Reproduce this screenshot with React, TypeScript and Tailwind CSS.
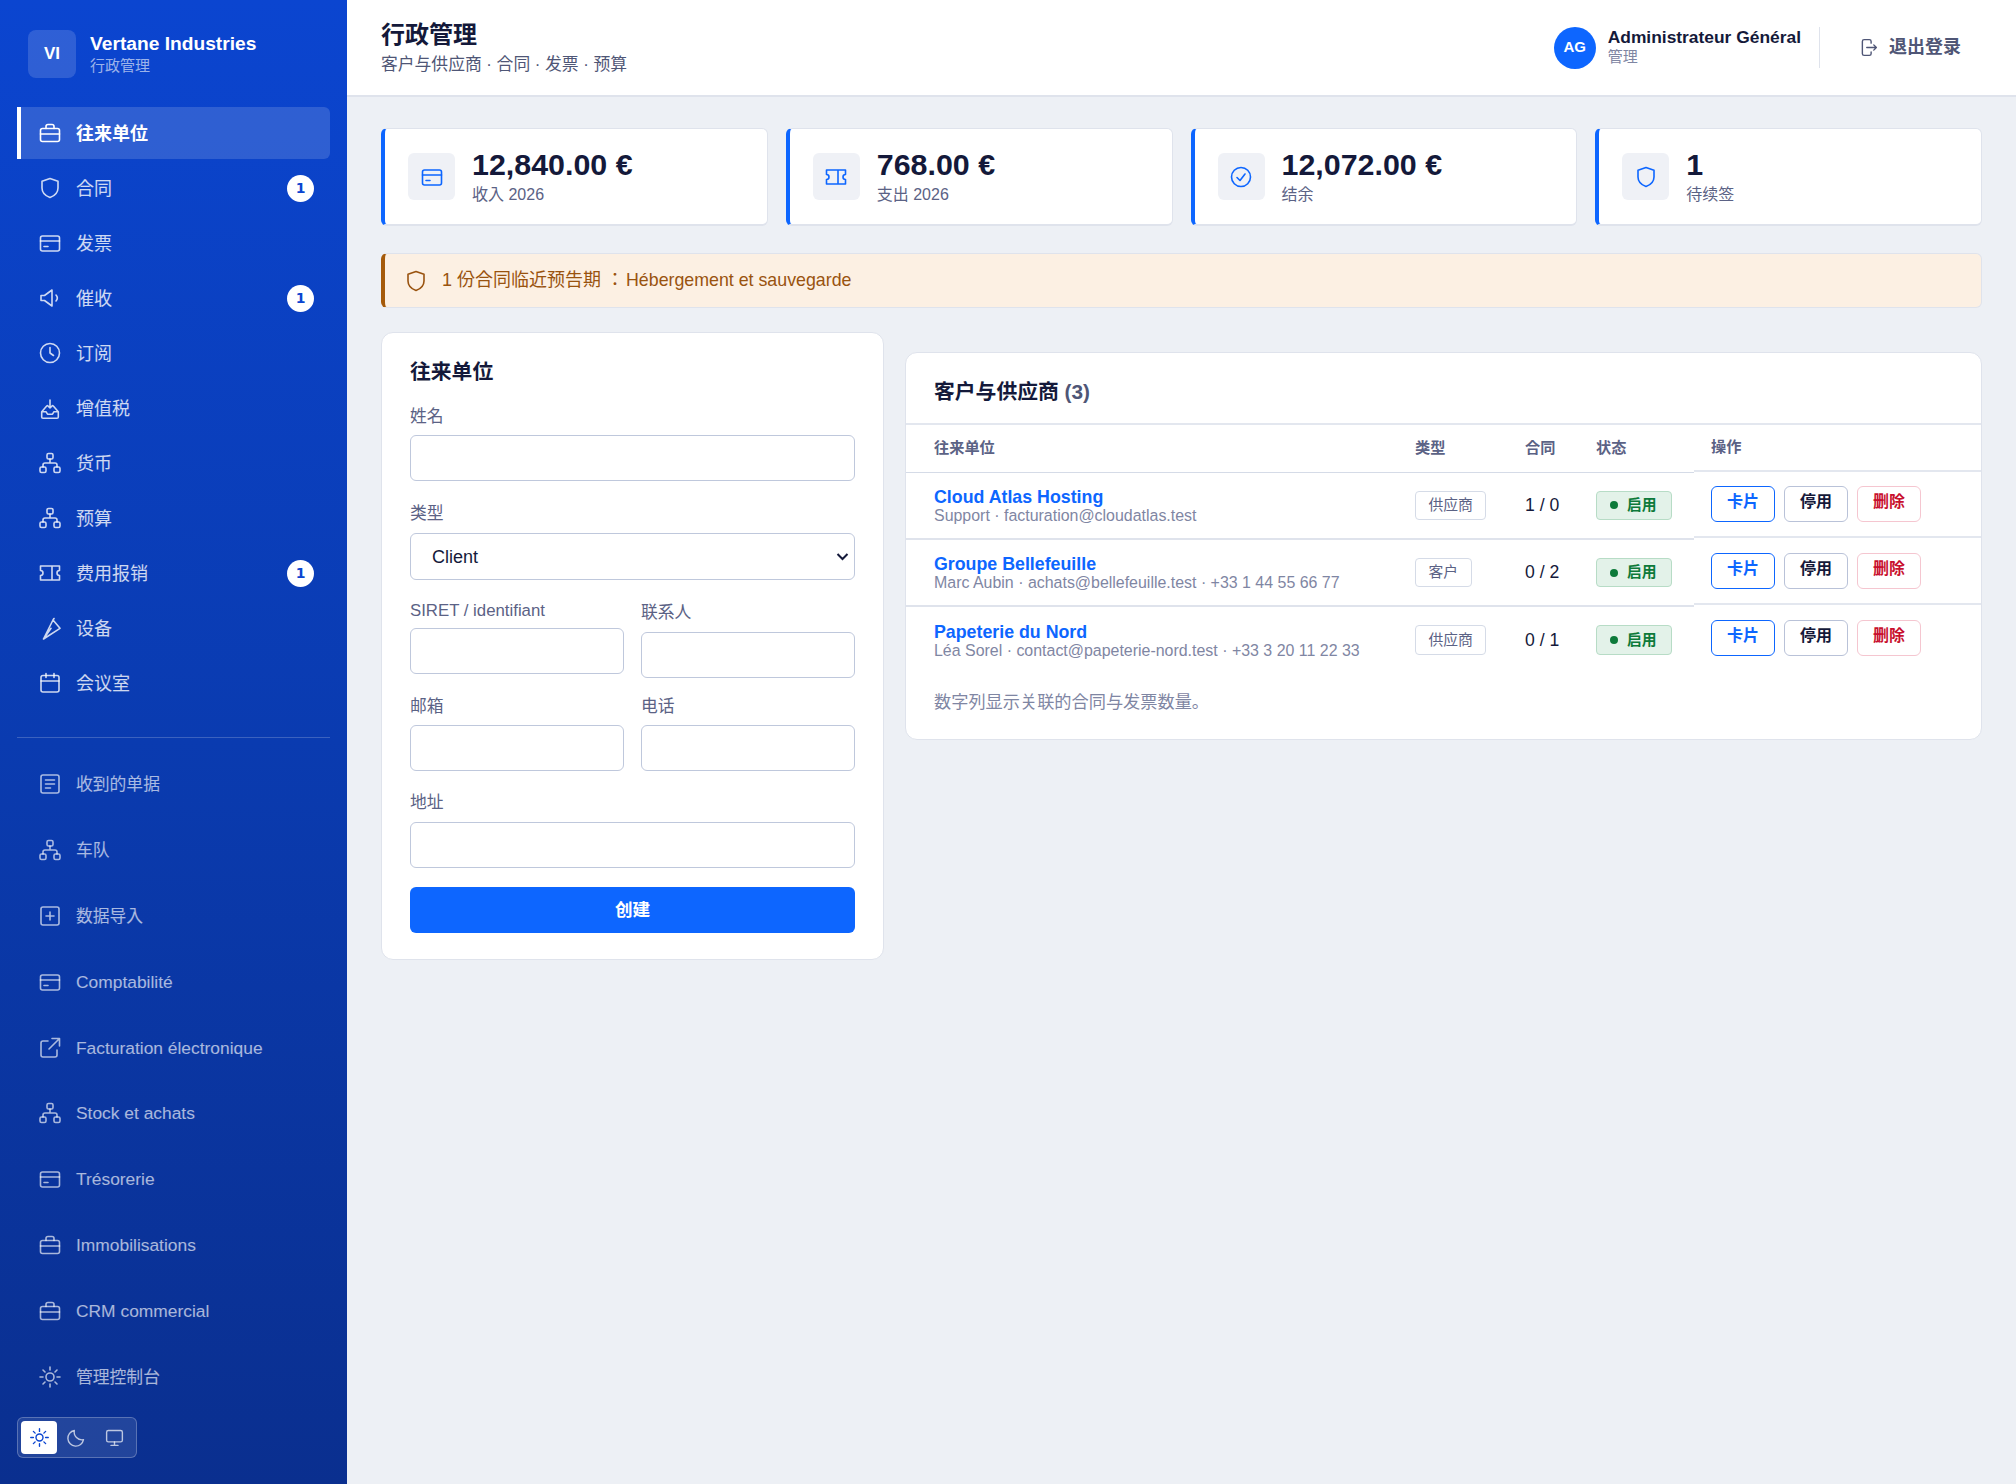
import type { ReactNode } from 'react';

const icons: Record<string, ReactNode> = {
  briefcase: (
    <>
      <rect x="2.500" y="7.500" width="19" height="13" rx="2" />
      <path d="M8 7.500V5.500a2 2 0 0 1 2-2h4a2 2 0 0 1 2 2v2M2.500 13h19" />
    </>
  ),
  shield: <path d="M12 2.500l8 2.800V12c0 4.600-3.400 7.800-8 9.500C7.400 19.800 4 16.600 4 12V5.300z" />,
  card: (
    <>
      <rect x="2.500" y="5" width="19" height="15" rx="2" />
      <path d="M2.500 10h19M6 15.500h4" />
    </>
  ),
  megaphone: <path d="M3 9.500v5h3.500L14 20V4L6.500 9.500zM18 9a4.500 4.500 0 0 1 0 6" />,
  clock: (
    <>
      <circle cx="12" cy="12" r="9.500" />
      <path d="M12 6.500V12l3.500 2.500" />
    </>
  ),
  inbox: (
    <path d="M8.700 10L3.700 15.700v5.300a1.300 1.300 0 0 0 1.300 1.300h14a1.300 1.300 0 0 0 1.300-1.300v-5.300L15.300 10M3.700 15.700H8l1.500 2.500h5l1.500-2.500h4.300M12 4v8M9.500 9.500L12 12l2.500-2.500" />
  ),
  network: (
    <>
      <rect x="9" y="2.500" width="6" height="5.500" rx="1.500" />
      <rect x="2" y="16" width="6" height="5.500" rx="1.500" />
      <rect x="16" y="16" width="6" height="5.500" rx="1.500" />
      <path d="M12 8v4M5 16v-2a2 2 0 0 1 2-2h10a2 2 0 0 1 2 2v2" />
    </>
  ),
  ticket: <path d="M2.500 5h19v4.500a2.500 2.500 0 0 0 0 5V19h-19v-4.500a2.500 2.500 0 0 0 0-5zM14 5v14" />,
  pen: <path d="M5.500 23L15 4l7 8.300L5.500 23zM5.500 23l7.500-10.700M15 4l1-1.500" />,
  calendar: (
    <>
      <rect x="3" y="4.500" width="18" height="16.500" rx="2" />
      <path d="M3 10h18M8 2.500v4M16 2.500v4" />
    </>
  ),
  list: (
    <>
      <rect x="3" y="3" width="18" height="18" rx="2" />
      <path d="M7.500 8h9M7.500 12h9M7.500 16h5" />
    </>
  ),
  plus: (
    <>
      <rect x="3" y="3" width="18" height="18" rx="2" />
      <path d="M12 8v8M8 12h8" />
    </>
  ),
  external: <path d="M10 5H5a2 2 0 0 0-2 2v12a2 2 0 0 0 2 2h12a2 2 0 0 0 2-2v-5M14 2.500h7.500V10M21.500 2.500L11 13" />,
  sun: (
    <>
      <circle cx="12" cy="12" r="4" />
      <path d="M12 2v3M12 19v3M2 12h3M19 12h3M5 5l2 2M17 17l2 2M5 19l2-2M17 7l2-2" />
    </>
  ),
  moon: <path d="M20 14.500A9 9 0 0 1 9.500 4a9 9 0 1 0 10.500 10.500z" />,
  monitor: (
    <>
      <rect x="3" y="4" width="18" height="13" rx="2" />
      <path d="M12 17v4M8 21h8" />
    </>
  ),
  logout: <path d="M15 7V5a2 2 0 0 0-2-2H7a2 2 0 0 0-2 2v14a2 2 0 0 0 2 2h6a2 2 0 0 0 2-2v-2M10 12h11M18 9l3 3-3 3" />,
  check: (
    <>
      <circle cx="12" cy="12" r="9.500" />
      <path d="M8 12.500l3 3 5-6.500" />
    </>
  ),
};

function Icon({ name, className }: { name: string; className?: string }) {
  return (
    <svg viewBox="0 0 24 24" fill="none" stroke="currentColor" strokeWidth="1.6" strokeLinecap="round" strokeLinejoin="round" className={className}>
      {icons[name]}
    </svg>
  );
}

const mainNav = [
  { icon: 'briefcase', label: '往来单位', active: true },
  { icon: 'shield', label: '合同', badge: 1 },
  { icon: 'card', label: '发票' },
  { icon: 'megaphone', label: '催收', badge: 1 },
  { icon: 'clock', label: '订阅' },
  { icon: 'inbox', label: '增值税' },
  { icon: 'network', label: '货币' },
  { icon: 'network', label: '预算' },
  { icon: 'ticket', label: '费用报销', badge: 1 },
  { icon: 'pen', label: '设备' },
  { icon: 'calendar', label: '会议室' },
];

const extraNav = [
  { icon: 'list', label: '收到的单据' },
  { icon: 'network', label: '车队' },
  { icon: 'plus', label: '数据导入' },
  { icon: 'card', label: 'Comptabilité', latin: true },
  { icon: 'external', label: 'Facturation électronique', latin: true },
  { icon: 'network', label: 'Stock et achats', latin: true },
  { icon: 'card', label: 'Trésorerie', latin: true },
  { icon: 'briefcase', label: 'Immobilisations', latin: true },
  { icon: 'briefcase', label: 'CRM commercial', latin: true },
  { icon: 'sun', label: '管理控制台' },
];

const stats = [
  { icon: 'card', value: '12,840.00 €', label: '收入 2026' },
  { icon: 'ticket', value: '768.00 €', label: '支出 2026' },
  { icon: 'check', value: '12,072.00 €', label: '结余' },
  { icon: 'shield', value: '1', label: '待续签' },
];

const partners = [
  { name: 'Cloud Atlas Hosting', info: 'Support · facturation@cloudatlas.test', type: '供应商', count: '1 / 0' },
  { name: 'Groupe Bellefeuille', info: 'Marc Aubin · achats@bellefeuille.test · +33 1 44 55 66 77', type: '客户', count: '0 / 2' },
  { name: 'Papeterie du Nord', info: 'Léa Sorel · contact@papeterie-nord.test · +33 3 20 11 22 33', type: '供应商', count: '0 / 1' },
];

function Sidebar() {
  return (
    <aside className="w-[347px] shrink-0 flex flex-col bg-gradient-to-b from-[#0b45d0] via-[#0a3bb0] to-[#0a2f8f] px-[17px] pt-[30px]">
      <div className="flex items-center gap-[14px] pl-[11px] mb-[29px]">
        <div className="w-[48px] h-[48px] rounded-lg bg-white/15 flex items-center justify-center text-white font-bold text-[17px]">VI</div>
        <div className="flex flex-col">
          <span className="text-white font-bold text-[19.2px] leading-[24px]">Vertane Industries</span>
          <span className="text-white/60 text-[15px] leading-[20px]">行政管理</span>
        </div>
      </div>
      <nav className="flex flex-col gap-[3px]">
        {mainNav.map((item) => (
          <div
            key={item.label}
            className={
              item.active
                ? 'h-[52px] flex items-center pl-[17px] pr-[16px] rounded-r-md border-l-4 border-white bg-white/15 text-white font-bold text-[18px]'
                : 'h-[52px] flex items-center pl-[21px] pr-[16px] text-white/80 text-[18px]'
            }
          >
            <Icon name={item.icon} className="w-[24px] h-[24px] shrink-0" />
            <span className="ml-[14px] mt-[2px]">{item.label}</span>
            {item.badge ? (
              <span className="ml-auto w-[27px] h-[27px] rounded-full bg-white text-[#0b45d0] text-[14px] font-bold flex items-center justify-center font-['DejaVu_Sans',sans-serif]">
                {item.badge}
              </span>
            ) : null}
          </div>
        ))}
      </nav>
      <div className="h-px bg-white/20 mt-[28px] mb-[20px]" />
      <nav className="flex flex-col gap-[13.9px]">
        {extraNav.map((item) => (
          <div key={item.label} className="h-[52px] flex items-center pl-[21px] text-white/65">
            <Icon name={item.icon} className="w-[24px] h-[24px] shrink-0" />
            <span className={item.latin ? 'ml-[14px] text-[17.4px]' : 'ml-[14px] mt-[2px] text-[16.8px]'}>{item.label}</span>
          </div>
        ))}
      </nav>
      <div className="mt-[14px] w-[120px] h-[41px] flex items-center p-[3px] rounded-md border border-white/25 bg-white/10">
        <div className="w-[36px] h-[33px] rounded-sm bg-white text-[#0b45d0] flex items-center justify-center">
          <Icon name="sun" className="w-[21px] h-[21px]" />
        </div>
        <div className="w-[38px] h-[33px] text-white/70 flex items-center justify-center">
          <Icon name="moon" className="w-[21px] h-[21px]" />
        </div>
        <div className="w-[38px] h-[33px] text-white/70 flex items-center justify-center">
          <Icon name="monitor" className="w-[21px] h-[21px]" />
        </div>
      </div>
    </aside>
  );
}

function Header() {
  return (
    <header className="h-[97px] flex items-center justify-between bg-white border-b-2 border-[#dfe3ec] pl-[34px] pr-[55px]">
      <div className="flex flex-col">
        <h1 className="text-[24px] leading-[34px] font-bold text-[#14193a]">行政管理</h1>
        <p className="text-[16.8px] leading-[26px] text-[#4f5676]">客户与供应商 · 合同 · 发票 · 预算</p>
      </div>
      <div className="flex items-center">
        <div className="w-[42px] h-[42px] rounded-full bg-[#0d66ff] text-white font-bold text-[15px] flex items-center justify-center">AG</div>
        <div className="ml-[12px] pb-[2px] flex flex-col">
          <span className="text-[17.4px] leading-[21px] font-bold text-[#14193a]">Administrateur Général</span>
          <span className="text-[15px] leading-[18px] text-[#7f86a3]">管理</span>
        </div>
        <div className="w-px h-[41px] bg-[#dfe3ec] ml-[18px] mr-[38px]" />
        <Icon name="logout" className="w-[21px] h-[21px] text-[#4f5676]" />
        <span className="ml-[10px] text-[18px] font-bold text-[#4f5676]">退出登录</span>
      </div>
    </header>
  );
}

function StatCard({ icon, value, label }: { icon: string; value: string; label: string }) {
  return (
    <div className="h-[98px] flex items-center bg-white rounded-md border border-[#dfe3ec] border-b-2 border-l-4 border-l-[#0d66ff] pl-[23px]">
      <div className="w-[47px] h-[47px] rounded-md bg-[#eff1f6] text-[#0d66ff] flex items-center justify-center">
        <Icon name={icon} className="w-[24px] h-[24px]" />
      </div>
      <div className="ml-[17px] flex flex-col">
        <span className="text-[30.4px] leading-[34px] font-bold text-[#14193a]">{value}</span>
        <span className="mt-[2px] text-[16px] leading-[24px] text-[#5b6285]">{label}</span>
      </div>
    </div>
  );
}

const inputClass = 'block w-full h-[46px] rounded-md border-[1.5px] border-[#bfc8dc] bg-white';
const labelClass = 'block leading-[normal] text-[16.8px] text-[#5b6285] mb-[8.5px]';

function Field({ label, className }: { label: string; className?: string }) {
  return (
    <div className={className}>
      <label className={labelClass}>{label}</label>
      <input className={inputClass} />
    </div>
  );
}

function PartnerForm() {
  return (
    <section className="bg-white rounded-xl border-[1.5px] border-[#dfe3ec] px-[28px] pt-[23.5px] pb-[26px]">
      <h2 className="text-[20.8px] leading-[30px] font-bold text-[#14193a] mb-[16px]">往来单位</h2>
      <Field label="姓名" className="mb-[19px]" />
      <div className="mb-[19px]">
        <label className={labelClass}>类型</label>
        <div className="relative">
          <select className="block w-full h-[47.5px] rounded-md border-[1.5px] border-[#bfc8dc] bg-white pl-[21px] pt-[2px] text-[18px] text-[#14193a] appearance-none">
            <option>Client</option>
          </select>
          <svg viewBox="0 0 12 8" fill="none" stroke="#14193a" strokeWidth="2" className="absolute right-[6px] top-[20px] w-[13px] h-[8px]">
            <path d="M1 1l5 5 5-5" />
          </svg>
        </div>
      </div>
      <div className="grid grid-cols-2 gap-x-[17px] gap-y-[15px] items-start mb-[18px]">
        <div>
          <label className="block leading-[normal] text-[16.8px] text-[#5b6285] pt-[2px] mb-[6.5px]">SIRET / identifiant</label>
          <input className={inputClass} />
        </div>
        <Field label="联系人" />
        <Field label="邮箱" />
        <Field label="电话" />
      </div>
      <Field label="地址" className="mb-[19px]" />
      <button className="block w-full h-[46px] pt-[2px] rounded-md bg-[#0d66ff] text-white font-bold text-[17.6px]">创建</button>
    </section>
  );
}

function PartnerTable() {
  return (
    <section className="mt-[20px] self-start bg-white rounded-xl border-[1.5px] border-[#dfe3ec] overflow-hidden">
      <h2 className="h-[72px] pt-[7px] flex items-center pl-[28px] border-b-2 border-[#e3e7ef] text-[20.8px] font-bold text-[#14193a]">
        客户与供应商&nbsp;<span className="text-[#4f5676]">(3)</span>
      </h2>
      <table className="w-full table-fixed border-collapse">
        <colgroup>
          <col className="w-[493px]" />
          <col className="w-[110px]" />
          <col className="w-[71px]" />
          <col className="w-[114px]" />
          <col />
        </colgroup>
        <thead>
          <tr className="h-[47px] text-left text-[15.2px] font-bold text-[#5b6285]">
            <th className="pl-[28px] border-b border-[#d5dbe7]">往来单位</th>
            <th className="pl-[16px] border-b border-[#d5dbe7]">类型</th>
            <th className="pl-[16px] border-b border-[#d5dbe7]">合同</th>
            <th className="pl-[16px] border-b border-[#d5dbe7]">状态</th>
            <th className="p-0 align-top">
              <div className="h-[46.5px] flex items-center pl-[17px] border-b-2 border-[#e3e7ef]">操作</div>
            </th>
          </tr>
        </thead>
        <tbody>
          {partners.map((p, i) => {
            const last = i === partners.length - 1;
            const cell = last ? 'pl-[16px]' : 'pl-[16px] border-b-2 border-[#dfe3ec]';
            return (
              <tr key={p.name} className="h-[67px]">
                <td className={last ? 'pl-[28px] pt-[2px]' : 'pl-[28px] pt-[2px] border-b-2 border-[#dfe3ec]'}>
                  <div className="text-[17.8px] leading-[18px] mb-px font-bold text-[#0d66ff]">{p.name}</div>
                  <div className="text-[15.95px] leading-[18px] text-[#7f86a3]">{p.info}</div>
                </td>
                <td className={cell}>
                  <span className="inline-flex items-center h-[29.5px] px-[12.5px] rounded border-[1.5px] border-[#d5dbe7] text-[14.8px] text-[#5b6285]">{p.type}</span>
                </td>
                <td className={cell + ' text-[17.6px] text-[#14193a]'}>{p.count}</td>
                <td className={cell}>
                  <span className="inline-flex items-center h-[29.5px] w-[76px] pl-[13px] rounded border-[1.5px] border-[#b7dcc6] bg-[#e3f2e9] text-[14.8px] font-bold text-[#0d7a3a]">
                    <span className="w-[8px] h-[8px] rounded-full bg-[#0d7a3a] mr-[9px]" />
                    启用
                  </span>
                </td>
                <td className={last ? 'flex gap-[9px] pl-[17px] pt-[14px] pb-[14px]' : 'flex gap-[9px] pl-[17px] pt-[14px] pb-[14px] border-b-2 border-[#e3e7ef]'}>
                  <button className="w-[64px] h-[36px] pb-[4px] rounded-md border-[1.5px] border-[#0d66ff] text-[16px] font-bold text-[#0d66ff]">卡片</button>
                  <button className="w-[64px] h-[36px] pb-[4px] rounded-md border-[1.5px] border-[#b9c2d8] text-[16px] font-bold text-[#14193a]">停用</button>
                  <button className="w-[64px] h-[36px] pb-[4px] rounded-md border-[1.5px] border-[#f5c6d0] text-[16px] font-bold text-[#c8102e]">删除</button>
                </td>
              </tr>
            );
          })}
        </tbody>
      </table>
      <p className="pl-[28px] pt-[17px] pb-[25px] text-[17.2px] leading-[24px] text-[#7f86a3]">数字列显示关联的合同与发票数量。</p>
    </section>
  );
}

export default function App() {
  return (
    <div className="flex min-h-[1484px] bg-[#edf0f5] font-['Liberation_Sans','Noto_Sans_CJK_JP',sans-serif]">
      <Sidebar />
      <div className="flex-1 min-w-0">
        <Header />
        <main className="pt-[31px] pl-[34px] pr-[34px]">
          <div className="grid grid-cols-4 gap-[18px] mb-[27px]">
            {stats.map((s) => (
              <StatCard key={s.label} {...s} />
            ))}
          </div>
          <div className="h-[55px] flex items-center rounded-md border border-[#dfe3ec] border-l-4 border-l-[#a55a0a] bg-[#fcf0e3] pl-[19px] text-[18px] text-[#99530f] mb-[24px]">
            <Icon name="shield" className="w-[24px] h-[24px]" />
            <span className="ml-[14px]">
              1 份合同临近预告期<span className="ml-[5px] mr-[-3px]">：</span> <span className="text-[17.8px]">Hébergement et sauvegarde</span>
            </span>
          </div>
          <div className="grid grid-cols-[503px_1fr] gap-[21px]">
            <PartnerForm />
            <PartnerTable />
          </div>
        </main>
      </div>
    </div>
  );
}
